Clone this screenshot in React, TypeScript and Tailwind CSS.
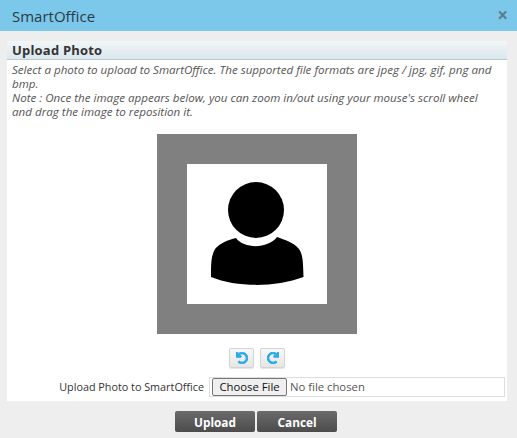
import { FaUndo, FaRedo } from 'react-icons/fa';

const font = { fontFamily: '"Open Sans", sans-serif' };

function RotateButton({ children }: { children: React.ReactNode }) {
  return (
    <button className="w-[25px] h-[20px] flex items-center justify-center rounded-[2px] border border-[#d4d4d4] bg-gradient-to-b from-[#f8f8f8] to-[#e6e6e6] shadow-[0_1px_1px_rgba(0,0,0,0.1)]">
      {children}
    </button>
  );
}

export default function App() {
  return (
    <div style={font} className="w-[517px] h-[438px] bg-[#eeeeee] flex flex-col overflow-hidden">
      {/* Title bar */}
      <div className="h-[31px] shrink-0 bg-[#7cc8ea] flex items-center justify-between pl-[12px] pr-[9px]">
        <span className="text-[15px] leading-[30px] text-[#2a3a44]">SmartOffice</span>
        <span className="text-[#5a7d92] text-[19px] font-bold leading-none">×</span>
      </div>

      {/* Panel */}
      <div className="mt-[10px] mx-[7px] w-[500px] h-[360px] bg-white flex flex-col shrink-0">
        <div className="h-[19px] shrink-0 bg-gradient-to-b from-[#f1f6f8] to-[#dbe7ee] border-b border-[#bcc8d0] pl-[5px] text-[13px] leading-[18px] font-bold tracking-[0.2px] text-[#333333]">
          Upload Photo
        </div>
        <p className="pl-[5px] pr-[8px] pt-[3px] text-[11.6px] leading-[14px] italic text-[#555555]">
          Select a photo to upload to SmartOffice. The supported file formats are jpeg / jpg, gif, png and bmp.
          <br />
          Note : Once the image appears below, you can zoom in/out using your mouse's scroll wheel and drag the image to reposition it.
        </p>

        <div className="mt-[15px] ml-[150px] w-[200px] h-[200px] shrink-0 bg-[#808080] flex items-center justify-center">
          <div className="w-[140px] h-[140px] bg-white">
            <svg width="140" height="140" viewBox="0 0 140 140">
              <circle cx="69" cy="46" r="28" fill="#000" />
              <path
                d="M49 74 C57 85 81 85 90 73 C98 76 106 78 112 85 C116 91 116 98 116.5 113 C88 123.500 50 123.500 24 113 C24 100 24 92 28 85 C33 79 41 76 49 74 Z"
                fill="#000"
              />
            </svg>
          </div>
        </div>

        <div className="mt-[14px] flex justify-center gap-[6px]">
          <RotateButton>
            <FaUndo size={12} stroke="#29abe8" strokeWidth={40} className="text-[#29abe8]" />
          </RotateButton>
          <RotateButton>
            <FaRedo size={12} stroke="#29abe8" strokeWidth={40} className="text-[#29abe8]" />
          </RotateButton>
        </div>

        <div className="mt-[9px] flex items-center justify-end pr-[2px] gap-[5px]">
          <span className="text-[10.800px] text-[#333333]">Upload Photo to SmartOffice</span>
          <div className="w-[296px] h-[20px] border border-[#dddddd] flex items-center pl-[2px] gap-[3px]">
            <span className="w-[75px] h-[18px] flex items-center justify-center bg-[#efefef] border border-[#767676] rounded-[2px] text-[11.300px] text-[#111111]">
              Choose File
            </span>
            <span className="text-[11.300px] text-[#555555]">No file chosen</span>
          </div>
        </div>
      </div>

      {/* Footer buttons */}
      <div className="mt-[10px] flex justify-center gap-[2px] pr-[5px]">
        <button className="w-[80px] h-[21px] rounded-[2px] bg-gradient-to-b from-[#6b6b6b] to-[#4c4c4c] text-white text-[11.800px] font-bold leading-[20px]">
          Upload
        </button>
        <button className="w-[80px] h-[21px] rounded-[2px] bg-gradient-to-b from-[#6b6b6b] to-[#4c4c4c] text-white text-[11.800px] font-bold leading-[20px]">
          Cancel
        </button>
      </div>
    </div>
  );
}
